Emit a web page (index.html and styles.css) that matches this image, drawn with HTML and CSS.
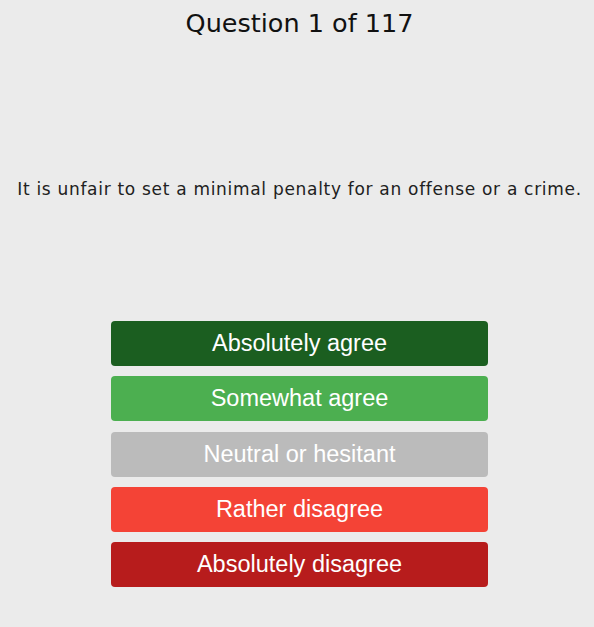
FILE: index.html
```html
<!DOCTYPE html>
<html lang="en">
<head>
    <meta charset="UTF-8">
    <meta name="viewport" content="width=device-width, initial-scale=1.0">
    <title>Question 1 of 117</title>
    <link rel="stylesheet" href="styles.css">
</head>
<body>
    <div class="quiz">
        <h1 class="title">Question 1 of 117</h1>

        <div class="question">
            It is unfair to set a minimal penalty for an offense or a crime.
        </div>

        <div class="answers">
            <button class="answer a-strong-yes">Absolutely agree</button>
            <button class="answer a-yes">Somewhat agree</button>
            <button class="answer a-neutral">Neutral or hesitant</button>
            <button class="answer a-no">Rather disagree</button>
            <button class="answer a-strong-no">Absolutely disagree</button>
        </div>
    </div>
</body>
</html>
```

FILE: styles.css
```css
body {
    margin: 0;
    padding: 0;
    background-color: #ebebeb;
    color: #212121;
    font-family: 'DejaVu Sans', sans-serif;
}

.quiz {
    display: flex;
    flex-direction: column;
    align-items: center;
    padding-top: 4px;
    padding-left: 5px;
}

.title {
    margin: 0;
    font-size: 25.5px;
    font-weight: normal;
    line-height: 38px;
    color: #111;
}

.question {
    display: flex;
    align-items: center;
    justify-content: center;
    height: 279px;
    font-size: 17px;
    letter-spacing: 0.7px;
    text-align: center;
    box-sizing: border-box;
    padding-top: 15px;
}

.answers {
    display: flex;
    flex-direction: column;
    gap: 10.25px;
    width: 377px;
}

.answer {
    height: 45px;
    border: none;
    border-radius: 4px;
    color: white;
    font-family: 'Liberation Sans', Arial, sans-serif;
    font-size: 23.5px;
    cursor: pointer;
}

.a-strong-yes { background-color: #1b5e20; }
.a-yes { background-color: #4caf50; }
.a-neutral { background-color: #bbbbbb; }
.a-no { background-color: #f44336; }
.a-strong-no { background-color: #b71c1c; }
```
